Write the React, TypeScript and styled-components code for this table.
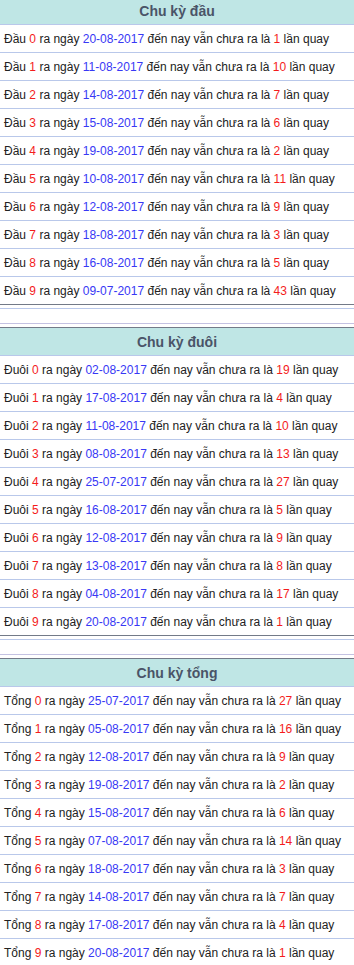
import * as React from "react";
import { createGlobalStyle, styled } from "styled-components";

const GlobalStyle = createGlobalStyle`
  body {
    margin: 0;
    background: #fff;
    color: #222;
    font-family: "Liberation Sans", Arial, Helvetica, sans-serif;
    font-size: 12px;
  }
`;

const Page = styled.div`
  width: 354px;
  margin-top: -4px;
`;

const Table = styled.section`
  border-top: 1px solid #737a88;
  border-bottom: 1px solid #737a88;
`;

const Header = styled.div`
  height: 27px;
  display: flex;
  align-items: center;
  justify-content: center;
  background: #bfe6e5;
  border-bottom: 1px solid #b9c8ea;
  color: #4a5468;
  font-weight: bold;
  font-size: 14px;
`;

const Row = styled.div`
  height: 27px;
  display: flex;
  align-items: center;
  padding-left: 4px;
  white-space: nowrap;

  & + & {
    border-top: 1px solid #b9c8ea;
  }
`;

const Red = styled.span`
  color: #f41c1c;
`;

const Date = styled.span`
  color: #3838f5;
`;

const Spacer = styled.div`
  height: 14px;
  margin: 3px 0;
  border-top: 1px solid #b9c8ea;
  border-bottom: 1px solid #c4c2e2;
`;

type Item = [string, string, number];

const sections: { title: string; label: string; items: Item[] }[] = [
  {
    title: "Chu kỳ đầu",
    label: "Đầu",
    items: [
      ["0", "20-08-2017", 1],
      ["1", "11-08-2017", 10],
      ["2", "14-08-2017", 7],
      ["3", "15-08-2017", 6],
      ["4", "19-08-2017", 2],
      ["5", "10-08-2017", 11],
      ["6", "12-08-2017", 9],
      ["7", "18-08-2017", 3],
      ["8", "16-08-2017", 5],
      ["9", "09-07-2017", 43],
    ],
  },
  {
    title: "Chu kỳ đuôi",
    label: "Đuôi",
    items: [
      ["0", "02-08-2017", 19],
      ["1", "17-08-2017", 4],
      ["2", "11-08-2017", 10],
      ["3", "08-08-2017", 13],
      ["4", "25-07-2017", 27],
      ["5", "16-08-2017", 5],
      ["6", "12-08-2017", 9],
      ["7", "13-08-2017", 8],
      ["8", "04-08-2017", 17],
      ["9", "20-08-2017", 1],
    ],
  },
  {
    title: "Chu kỳ tổng",
    label: "Tổng",
    items: [
      ["0", "25-07-2017", 27],
      ["1", "05-08-2017", 16],
      ["2", "12-08-2017", 9],
      ["3", "19-08-2017", 2],
      ["4", "15-08-2017", 6],
      ["5", "07-08-2017", 14],
      ["6", "18-08-2017", 3],
      ["7", "14-08-2017", 7],
      ["8", "17-08-2017", 4],
      ["9", "20-08-2017", 1],
    ],
  },
];

export default function App() {
  return (
    <Page>
      <GlobalStyle />
      {sections.map((s, i) => (
        <React.Fragment key={s.title}>
          {i > 0 && <Spacer />}
          <Table>
            <Header>{s.title}</Header>
            {s.items.map(([num, date, count]) => (
              <Row key={num}>
                {s.label}&nbsp;<Red>{num}</Red>&nbsp;ra ngày&nbsp;
                <Date>{date}</Date>&nbsp;đến nay vẫn chưa ra là&nbsp;
                <Red>{count}</Red>&nbsp;lần quay
              </Row>
            ))}
          </Table>
        </React.Fragment>
      ))}
    </Page>
  );
}
